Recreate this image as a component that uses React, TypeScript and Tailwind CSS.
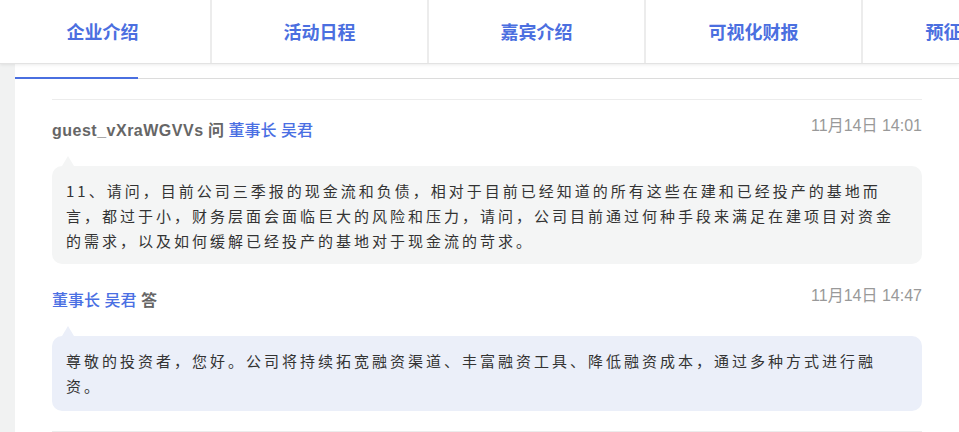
import React from 'react';

const tabs = ['企业介绍', '活动日程', '嘉宾介绍', '可视化财报', '预征集问题'];

const sans = "font-['Liberation_Sans','Noto_Sans_CJK_SC',sans-serif]";
const cjk = "font-['Noto_Sans_CJK_SC','Liberation_Sans',sans-serif]";

function Bubble({ tone, children }: { tone: 'q' | 'a'; children: React.ReactNode }) {
  const box = tone === 'q' ? 'bg-[#f4f5f5] pb-[11px]' : 'bg-[#ebeff9] pb-[13px]';
  const tri = tone === 'q' ? 'border-b-[#f4f5f5]' : 'border-b-[#ebeff9]';
  return (
    <div className={`relative mt-[23px] rounded-[10px] px-[14px] pt-[12px] ${box}`}>
      <span className={`absolute -top-[10px] left-[10px] h-0 w-0 border-x-[6px] border-b-[10px] border-x-transparent ${tri}`} />
      <p className={`${cjk} text-[15px] leading-[25px] tracking-[3px] text-[#333]`}>{children}</p>
    </div>
  );
}

export default function App() {
  return (
    <div className={`h-[432px] w-[959px] overflow-hidden bg-[#f1f2f2] ${sans}`}>
      {/* Top nav */}
      <nav className="relative z-10 h-[64px] overflow-hidden border-b border-[#e3e3e3] bg-white shadow-[0_1px_3px_rgba(0,0,0,0.08)]">
        <div className="-ml-[5px] flex h-full">
          {tabs.map(t => (
            <div key={t} className="flex h-full w-[217px] shrink-0 items-center justify-center border-r-2 border-[#ececec]">
              <span className={`${cjk} whitespace-nowrap text-[18px] font-bold text-[#4b6fe0]`}>{t}</span>
            </div>
          ))}
        </div>
      </nav>

      {/* Content panel */}
      <div className="ml-[15px] h-full bg-white">
        <div className="flex h-[15px] items-end">
          <div className="h-[2px] w-[123px] bg-[#4a6fe0]" />
          <div className="h-px flex-1 bg-[#dcdcdc]" />
        </div>

        <div className="ml-[37px] mr-[37px] mt-[20px] border-t border-[#ececec] pt-[19px]">
          {/* Question */}
          <div className="flex items-start justify-between">
            <div className="text-[16px] leading-[24px]">
              <span className="font-bold tracking-[0.5px] text-[#666]">guest_vXraWGVVs</span>
              <span className="font-bold text-[#666]"> 问 </span>
              <span className="font-medium text-[#4a6fe3]">董事长 吴君</span>
            </div>
            <span className="-mt-[1px] text-[16px] leading-[16px] text-[#999]">11月14日 14:01</span>
          </div>
          <Bubble tone="q">
            11、请问，目前公司三季报的现金流和负债，相对于目前已经知道的所有这些在建和已经投产的基地而言，都过于小，财务层面会面临巨大的风险和压力，请问，公司目前通过何种手段来满足在建项目对资金的需求，以及如何缓解已经投产的基地对于现金流的苛求。
          </Bubble>

          {/* Answer */}
          <div className="mt-[25px] flex items-start justify-between">
            <div className="text-[16px] leading-[24px]">
              <span className="font-medium text-[#4a6fe3]">董事长 吴君</span>
              <span className="font-bold text-[#666]"> 答</span>
            </div>
            <span className="-mt-[1px] text-[16px] leading-[16px] text-[#999]">11月14日 14:47</span>
          </div>
          <Bubble tone="a">
            尊敬的投资者，您好。公司将持续拓宽融资渠道、丰富融资工具、降低融资成本，通过多种方式进行融资。
          </Bubble>

          <div className="mt-[20px] border-t border-[#ececec]" />
        </div>
      </div>
    </div>
  );
}
